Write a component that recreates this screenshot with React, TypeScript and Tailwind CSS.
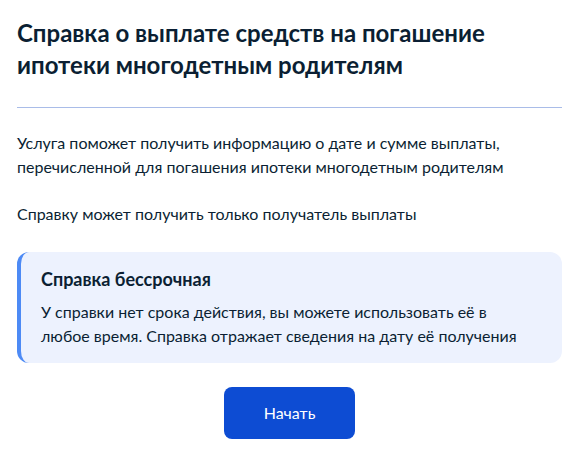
import React from 'react';

const App: React.FC = () => {
    return (
        <div className="w-[575px] h-[454px] bg-white text-[#0b1f33] font-['Lato',sans-serif]">
            <div className="w-[545px] ml-[17px] pt-[17px] flex flex-col">
                <h1 className="text-[24px] leading-[32px] font-bold">
                    Справка о выплате средств на погашение ипотеки многодетным родителям
                </h1>
                <div className="mt-[26px] h-px bg-[#a9bce8]" />
                <p className="mt-[23px] text-[16px] leading-[24px]">
                    Услуга поможет получить информацию о дате и сумме выплаты, перечисленной для погашения ипотеки многодетным родителям
                </p>
                <p className="mt-[23px] text-[16px] leading-[24px]">
                    Справку может получить только получатель выплаты
                </p>
                <div className="mt-[26px] rounded-xl bg-[#edf2fe] border-l-4 border-[#4d8af5] pl-5 pr-8 pt-[15px] pb-[15px]">
                    <h2 className="text-[18px] leading-[24px] font-bold">Справка бессрочная</h2>
                    <p className="mt-[9px] text-[16px] leading-[24px]">
                        У справки нет срока действия, вы можете использовать её в любое время. Справка отражает сведения на дату её получения
                    </p>
                </div>
                <div className="mt-6 flex justify-center">
                    <button className="w-[131px] h-[52px] rounded-lg bg-[#0d4cd3] text-white text-[16px]">
                        Начать
                    </button>
                </div>
            </div>
        </div>
    );
};

export default App;
